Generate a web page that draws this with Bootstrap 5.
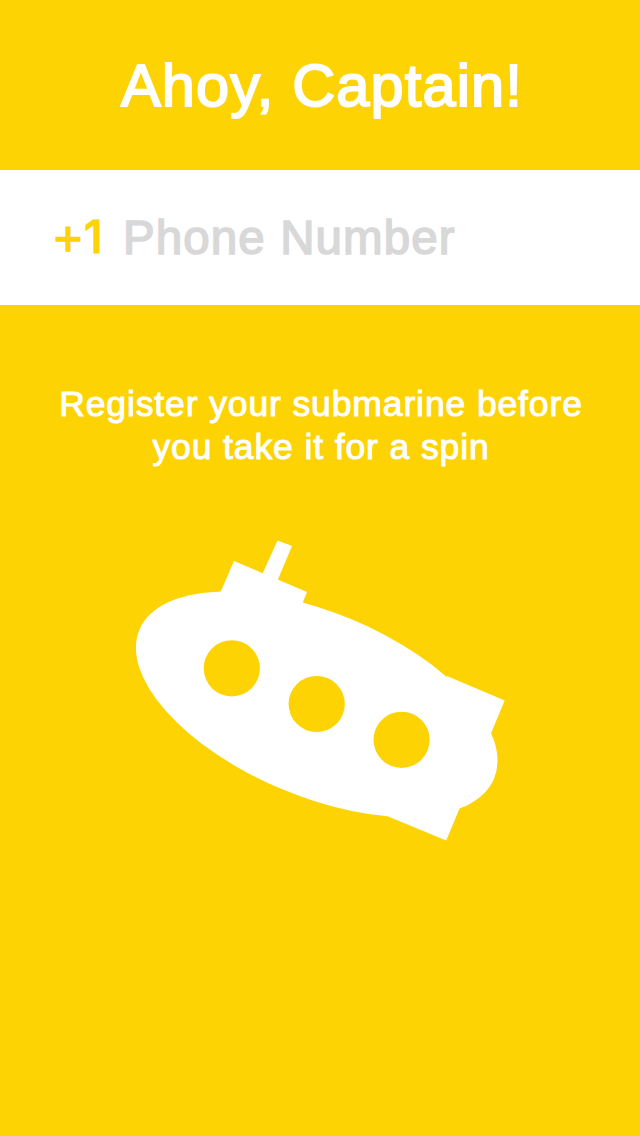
<!DOCTYPE html>
<html lang="en">
<head>
<meta charset="utf-8">
<meta name="viewport" content="width=device-width, initial-scale=1">
<title>Ahoy, Captain!</title>
<link href="https://cdn.jsdelivr.net/npm/bootstrap@5.3.0/dist/css/bootstrap.min.css" rel="stylesheet">
<style>
  :root { --sun: #fdd303; }
  body { font-family: "Liberation Sans", Arial, sans-serif; background: var(--sun); }
  .screen { height: 1136px; }
  .title-bar { height: 170px; padding: 1px 0 0 4px; }
  .title-bar h1 { font-size: 59.5px; line-height: 72px; letter-spacing: 1.15px; -webkit-text-stroke: 1.9px #fff; }
  .phone-row { height: 135px; padding: 0 54px; font-size: 48px; line-height: 58px; }
  .prefix { color: var(--sun); -webkit-text-stroke: 1.6px var(--sun); width: 69px; padding-top: 2px; }
  .prefix .digit { font-family: Inter, "Liberation Sans", sans-serif; font-size: 45px; font-weight: 500; margin-left: 2px; vertical-align: 2px; line-height: 1; -webkit-text-stroke: 1px var(--sun); }
  .phone-row .form-control { font-size: 47.5px; line-height: 58px; height: 58px; letter-spacing: 1.1px; }
  .phone-row .form-control::placeholder { color: #d8d8d8; opacity: 1; -webkit-text-stroke: 1.6px #d8d8d8; }
  .hint { font-size: 35.5px; line-height: 43px; padding: 78px 0 0 2px; letter-spacing: .88px; -webkit-text-stroke: 1px #fff; }
  .submarine { margin-top: 67px; }
</style>
</head>
<body>
<main class="screen d-flex flex-column overflow-hidden text-white">
  <header class="title-bar d-flex align-items-center justify-content-center">
    <h1 class="m-0 fw-normal text-nowrap">Ahoy, Captain!</h1>
  </header>
  <form class="phone-row bg-white d-flex align-items-center">
    <label for="phone" class="prefix flex-shrink-0">+<span class="digit">1</span></label>
    <input id="phone" type="tel" class="form-control border-0 rounded-0 shadow-none bg-transparent p-0" placeholder="Phone Number">
  </form>
  <p class="hint m-0 text-center text-nowrap">Register your submarine before<br>you take it for a spin</p>
  <svg class="submarine d-block mx-auto flex-shrink-0" width="380" height="310" viewBox="130 536 380 310" role="img" aria-label="Submarine">
    <g fill="#fff">
      <ellipse cx="316.7" cy="704.2" rx="192.3" ry="91.8" transform="rotate(22.8 316.7 704.2)"/>
      <path d="M234 561 307 592 302.5 603 260 640 220.5 592Z"/>
      <path d="M277.5 540.5 292 546 276 584 261 577Z"/>
      <path d="M447 676 504.7 700.5 446.2 840.5 387 816Z"/>
    </g>
    <g fill="#fdd303">
      <circle cx="231.8" cy="668.3" r="28.1"/>
      <circle cx="316.7" cy="704" r="28.1"/>
      <circle cx="401.6" cy="739.8" r="28.1"/>
    </g>
  </svg>
</main>
<script src="https://cdn.jsdelivr.net/npm/bootstrap@5.3.0/dist/js/bootstrap.bundle.min.js"></script>
</body>
</html>
